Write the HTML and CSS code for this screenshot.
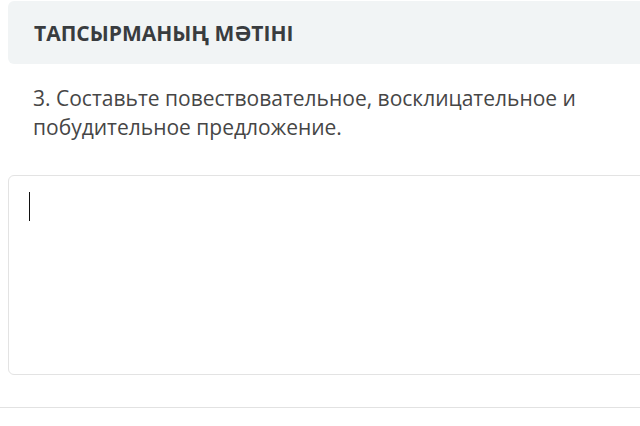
FILE: index.html
```html
<!DOCTYPE html>
<html lang="ru">
<head>
  <meta charset="UTF-8" />
  <meta name="viewport" content="width=device-width, initial-scale=1.0"/>
  <title>Тапсырма</title>
  <link rel="stylesheet" href="styles.css">
</head>
<body>

  <div class="task">
    <div class="task-head">
      <h2>ТАПСЫРМАНЫҢ МӘТІНІ</h2>
    </div>

    <p class="task-text">3. Составьте повествовательное, восклицательное и побудительное предложение.</p>

    <div class="answer">
      <span class="caret"></span>
    </div>
  </div>

  <div class="divider"></div>

</body>
</html>
```

FILE: styles.css
```css
body {
  margin: 0;
  background: #fff;
  font-family: 'Open Sans', sans-serif;
  color: #444;
  overflow: hidden;
}

.task {
  padding-left: 8px;
  margin-right: -20px;
}

.task-head {
  background: #f1f4f5;
  height: 63px;
  margin-top: 1px;
  border-radius: 6px 0 0 6px;
  display: flex;
  align-items: center;
  padding-left: 26px;
}

.task-head h2 {
  margin: 0;
  font-size: 21px;
  font-weight: 700;
  color: #393c3f;
}

.task-text {
  margin: 20px 0 0;
  padding-left: 25px;
  width: 580px;
  font-size: 21px;
  line-height: 29px;
  color: #464646;
}

.answer {
  margin-top: 33px;
  height: 166px;
  border: 1px solid #e3e3e3;
  border-radius: 6px 0 0 6px;
  padding: 16px 20px;
  box-sizing: content-box;
}

.caret {
  display: block;
  width: 1px;
  height: 29px;
  background: #111;
}

.divider {
  margin-top: 32px;
  border-top: 1px solid #e2e2e2;
}
```
